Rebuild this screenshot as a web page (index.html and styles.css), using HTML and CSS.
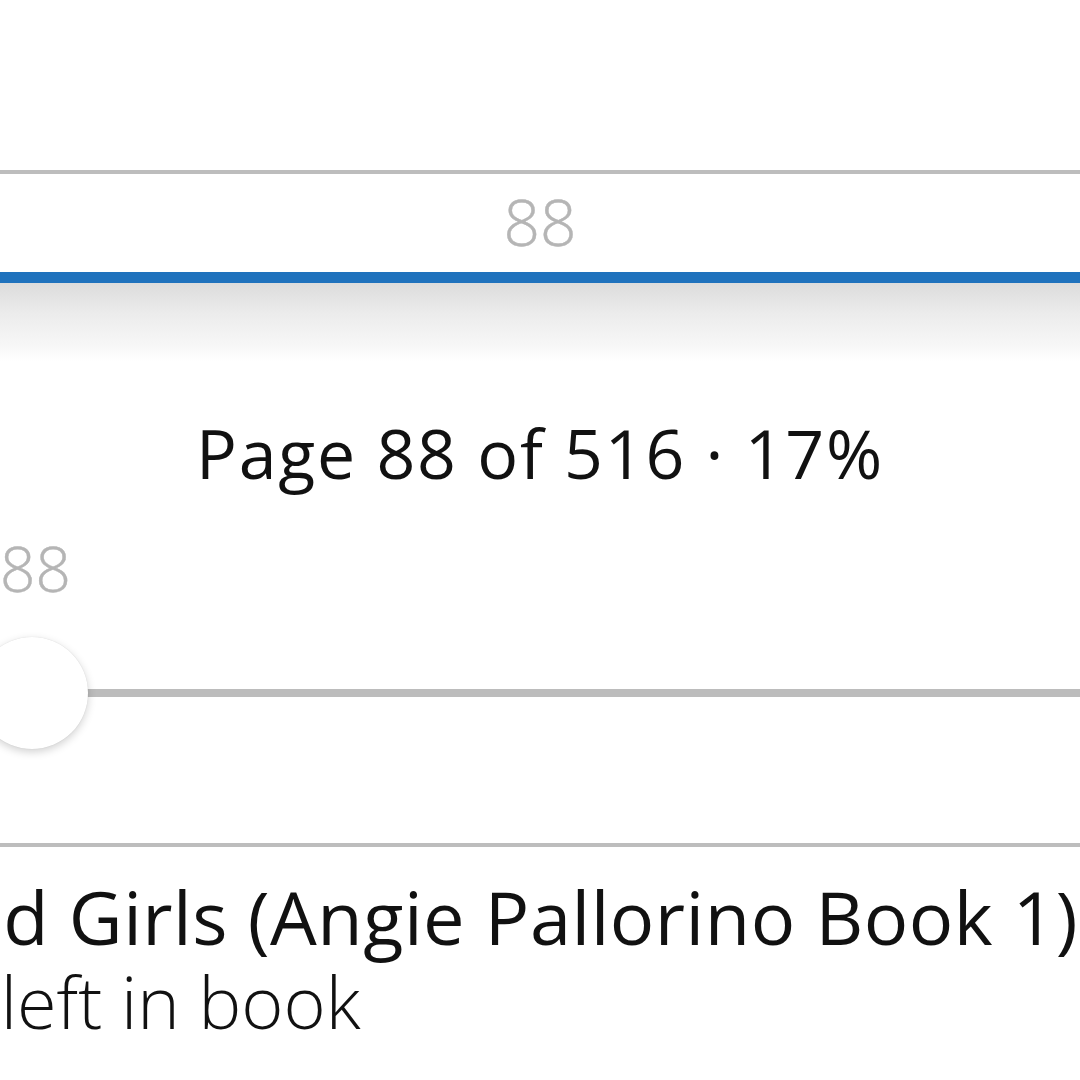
FILE: index.html
```html
<!DOCTYPE html>
<html>
<head>
<meta charset="utf-8">
<link rel="stylesheet" href="styles.css">
</head>
<body>
<div class="screen">
  <div class="top-space"></div>
  <div class="rule"></div>
  <div class="page-field"><span class="page-input">88</span></div>
  <div class="blue-bar"></div>
  <div class="shade"></div>
  <div class="progress-text">Page 88 of 516 · 17%</div>
  <div class="slider">
    <div class="thumb-label">88</div>
    <div class="track-row">
      <div class="track"></div>
      <div class="thumb"></div>
    </div>
  </div>
  <div class="rule rule-bottom"></div>
  <div class="book-info">
    <div class="book-text">
      <div class="book-title">The Drowned Girls (Angie Pallorino Book 1)</div>
      <div class="book-left">8 hrs 12 mins left in book</div>
    </div>
  </div>
</div>
</body>
</html>
```
FILE: styles.css
```css
html, body {
  margin: 0;
  padding: 0;
  background: #ffffff;
  overflow: hidden;
}
.screen {
  width: 1080px;
  height: 1080px;
  overflow: hidden;
  font-family: "Open Sans", "Noto Sans", sans-serif;
  display: flex;
  flex-direction: column;
}
.top-space {
  height: 170px;
  flex: none;
}
.rule {
  height: 4px;
  background: #bdbdbd;
  flex: none;
}
.page-field {
  height: 98px;
  flex: none;
  display: flex;
  justify-content: center;
  align-items: center;
}
.page-input {
  font-size: 64px;
  font-weight: 300;
  color: #b5b5b5;
  line-height: 1;
  margin-top: -2px;
  -webkit-text-stroke: 0.4px #b5b5b5;
}
.blue-bar {
  height: 11px;
  background: #1f72bd;
  flex: none;
}
.shade {
  height: 78px;
  flex: none;
  background: linear-gradient(to bottom, #dcdcdc 0%, #ececec 40%, #f7f7f7 80%, #ffffff 100%);
}
.progress-text {
  text-align: center;
  font-size: 68px;
  font-weight: 370;
  letter-spacing: 1.8px;
  color: #111111;
  line-height: 1;
  margin-top: 58px;
  height: 70px;
  flex: none;
}
.slider {
  margin-top: 48px;
  flex: none;
}
.thumb-label {
  width: 66px;
  text-align: center;
  font-size: 62px;
  font-weight: 300;
  color: #b5b5b5;
  line-height: 1;
  -webkit-text-stroke: 0.4px #b5b5b5;
}
.track-row {
  position: relative;
  height: 112px;
  margin-top: 38px;
  display: flex;
  align-items: center;
}
.track {
  height: 8px;
  width: 100%;
  background: #bcbcbc;
}
.thumb {
  position: absolute;
  left: -24px;
  top: 0;
  width: 112px;
  height: 112px;
  border-radius: 50%;
  background: #ffffff;
  box-shadow: 0 3px 8px rgba(0, 0, 0, 0.18), 0 0 1px rgba(0, 0, 0, 0.15);
}
.rule-bottom {
  margin-top: 94px;
}
.book-info {
  display: flex;
  justify-content: flex-end;
  padding-right: 2px;
  margin-top: 27px;
  white-space: nowrap;
  color: #111111;
}
.book-text {
  flex: none;
}
.book-title {
  font-size: 74px;
  font-weight: 500;
  letter-spacing: 0.5px;
  line-height: 85px;
  height: 85px;
}
.book-left {
  font-size: 72px;
  font-weight: 300;
  line-height: 85px;
  height: 85px;
  margin-left: -36px;
}
```
